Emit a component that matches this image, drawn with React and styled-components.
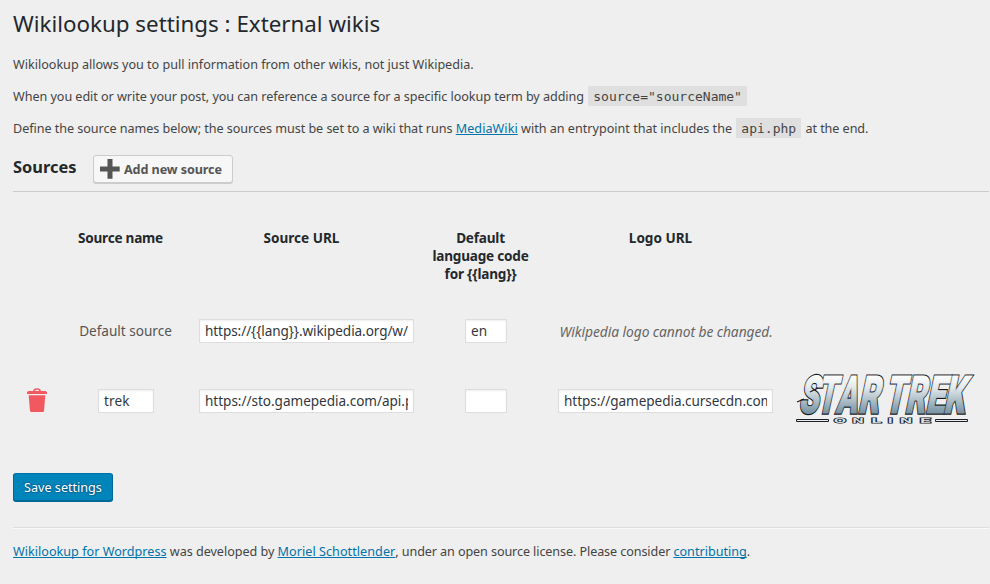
import React from "react";
import styled, { createGlobalStyle } from "styled-components";

const GlobalStyle = createGlobalStyle`
  *, *::before, *::after { box-sizing: border-box; }
  html, body { margin: 0; background: #efefef; }
  body {
    color: #444;
    font-family: "Noto Sans", sans-serif;
    font-size: 12.6px;
    line-height: 20px;
    overflow: hidden;
  }
`;

const Page = styled.main`
  height: 584px;
  padding: 9px 1px 0 13px;
  white-space: nowrap;
`;

const Title = styled.h1`
  margin: 0 0 16px;
  color: #23282d;
  font-size: 22.35px;
  font-weight: 400;
  line-height: 30px;
`;

const Paragraph = styled.p`
  margin: 0 0 12px;
  height: 20px;
  letter-spacing: ${(p) => p.$tracking || 0}px;
`;

const Phrase = styled.span`
  letter-spacing: ${(p) => p.$tracking || 0}px;
`;

const Link = styled.a`
  color: #0073aa;
  text-decoration: underline;
  text-decoration-thickness: 1px;
  text-underline-offset: 1px;
  text-decoration-skip-ink: none;
  letter-spacing: ${(p) => p.$tracking || 0}px;
`;

const Code = styled.code`
  margin: 0 1px;
  padding: 3px 5px 2px;
  background: #dfdfdf;
  font-family: "DejaVu Sans Mono", monospace;
  font-size: 13px;
  letter-spacing: 0;
`;

const SourcesBar = styled.header`
  display: flex;
  align-items: flex-start;
  height: 37px;
  margin-top: 16px;
  border-bottom: 1px solid #ccc;
`;

const SectionTitle = styled.h2`
  width: 80px;
  margin: 2px 0 0;
  color: #23282d;
  font-size: 16.4px;
  font-weight: 700;
  line-height: 20px;
`;

const AddButton = styled.button`
  display: flex;
  align-items: center;
  gap: 4px;
  width: 140px;
  height: 28px;
  padding: 0 0 0 6px;
  border: 1px solid #ccc;
  border-radius: 3px;
  background: #f7f7f7;
  box-shadow: 0 1px 0 #ccc;
  color: #555;
  font: 700 12.6px/26px "Noto Sans", sans-serif;
  letter-spacing: -0.09px;
`;

const AddLabel = styled.span`
  padding-top: 1px;
`;

const columns = "48px 130px 231px 128px 231px 1fr";

const HeadRow = styled.div`
  display: grid;
  grid-template-columns: ${columns};
  height: 104px;
  padding-top: 37px;
`;

const HeadCell = styled.div`
  padding-right: ${(p) => p.$inset || 10}px;
  color: #23282d;
  font-size: 13.57px;
  font-weight: 700;
  line-height: 18px;
  letter-spacing: ${(p) => p.$tracking || 0}px;
  text-align: center;
  white-space: pre-line;
`;

const SourceRow = styled.div`
  display: grid;
  grid-template-columns: ${columns};
  align-items: center;
  height: 70px;
`;

const Cell = styled.div`
  display: flex;
  justify-content: ${(p) => (p.$start ? "flex-start" : "center")};
  padding-left: ${(p) => p.$inset || 0}px;
  padding-bottom: ${(p) => p.$lift || 0}px;
`;

const RowLabel = styled.span`
  padding-right: 1px;
  font-size: 13.57px;
  color: #555;
`;

const Notice = styled.em`
  padding-top: 1px;
  color: #666;
  font-size: 13.8px;
  letter-spacing: ${(p) => p.$tracking || 0}px;
`;

const Field = styled.input`
  width: ${(p) => p.$width}px;
  height: 24px;
  margin: 0;
  padding: 1px 5px 2px;
  border: 1px solid #ddd;
  border-radius: 0;
  outline: 0;
  background: #fff;
  box-shadow: inset 0 1px 2px rgba(0, 0, 0, 0.07);
  color: #32373c;
  font: 13.57px/19px "Noto Sans", sans-serif;
  letter-spacing: ${(p) => p.$tracking || 0}px;
`;

const SaveButton = styled.button`
  display: block;
  width: 100px;
  height: 28px;
  margin: 37px 0 26px;
  padding: 1px 0 0;
  border: 1px solid #006799;
  border-color: #0073aa #006799 #006799;
  border-radius: 3px;
  background: #0085ba;
  box-shadow: 0 1px 0 #006799;
  color: #fff;
  font: 12.6px/25px "Noto Sans", sans-serif;
  text-shadow: 0 -1px 1px #006799, 1px 0 1px #006799, 0 1px 1px #006799, -1px 0 1px #006799;
`;

const Footer = styled.footer`
  padding-top: 14px;
  border-top: 1px solid #ddd;
  box-shadow: inset 0 1px 0 #fafafa;
`;

const Drawing = styled.svg`
  display: block;
  flex: none;
  overflow: visible;
`;

const PlusIcon = () => (
  <Drawing width="20" height="20" viewBox="0 0 20 20">
    <path d="M7.5 0h5v7.5h7.2v5h-7.2v7.2h-5v-7.2H0v-5h7.5z" fill="#555" />
  </Drawing>
);

const TrashIcon = () => (
  <Drawing width="20" height="26" viewBox="0 0 20 26">
    <path d="M7 4.5V4q0-2 3-2t3 2v.5" fill="none" stroke="#f0595f" strokeWidth="1.6" />
    <path d="M1.3 4h17.4l1.3 1.3V7H0V5.300z" fill="#f0595f" />
    <path d="M1.700 8.300h16.600L17 24l-.8 1H3.800L3 24z" fill="#f0595f" />
  </Drawing>
);

const Glyph = styled.text`
  font-family: Roboto, sans-serif;
  font-weight: 900;
  font-size: 52px;
  fill: ${(p) => (p.$outline ? "#15191c" : "url(#steel)")};
  stroke: ${(p) => (p.$outline ? "#15191c" : "url(#steel)")};
  stroke-width: ${(p) => (p.$outline ? 3.3 : 1)}px;
  stroke-linejoin: miter;
  stroke-miterlimit: 3;
`;

const SmallGlyph = styled.text`
  font-family: Inter, sans-serif;
  font-weight: 700;
  font-size: 6.4px;
  paint-order: stroke;
  fill: #dbe1e5;
  stroke: #1c2125;
  stroke-width: 1.1px;
`;

const titleLetters = [
  ["S", 6, 20], ["T", 24, 19], ["A", 43.5, 21], ["R", 65.5, 21],
  ["T", 92, 20], ["R", 112.5, 20.5], ["E", 133, 19], ["K", 151, 21],
];

const subLetters = [
  ["O", 42, 12], ["N", 60.5, 11], ["L", 79.5, 10],
  ["I", 96, 4.5], ["N", 108, 12], ["E", 128, 11],
];

const StarTrekLogo = () => (
  <Drawing width="186" height="60" viewBox="0 0 186 60">
    <defs>
      <linearGradient id="steel" gradientUnits="userSpaceOnUse" x1="0" y1="-38" x2="0" y2="0">
        <stop offset="0" stopColor="#ffffff" />
        <stop offset="0.35" stopColor="#e0e7eb" />
        <stop offset="1" stopColor="#7894a4" />
      </linearGradient>
    </defs>
    {[true, false].map((outline) =>
      titleLetters.map(([letter, x, width]) => (
        <Glyph
          key={`${outline}${x}`}
          $outline={outline}
          transform={`translate(${x} 45) skewX(-12)`}
          textLength={width}
          lengthAdjust="spacingAndGlyphs"
        >
          {letter}
        </Glyph>
      ))
    )}
    <path d="M5 34l7-3M18 24l8-4" stroke="#15191c" strokeWidth="1.1" />
    <path d="M4.500 51.500h32v2h-32zM143.500 51.500h32v2h-32z" fill="#e8ecee" stroke="#1c2125" />
    {subLetters.map(([letter, x, width]) => (
      <SmallGlyph key={x} x={x} y="55" textLength={width} lengthAdjust="spacingAndGlyphs">
        {letter}
      </SmallGlyph>
    ))}
  </Drawing>
);

export default function App() {
  return (
    <>
      <GlobalStyle />
      <Page>
        <Title>Wikilookup settings : External wikis</Title>
        <Paragraph $tracking={-0.005}>
          Wikilookup allows you to pull information from other wikis, not just Wikipedia.
        </Paragraph>
        <Paragraph $tracking={-0.045}>
          When you edit or write your post, you can reference a source for a specific lookup term by
          adding <Code>source="sourceName"</Code>
        </Paragraph>
        <Paragraph>
          <Phrase $tracking={-0.045}>
            Define the source names below; the sources must be set to a wiki that runs{" "}
          </Phrase>
          <Link $tracking={0.05}>MediaWiki</Link> with an entrypoint that includes the{" "}
          <Code>api.php</Code> <Phrase $tracking={-0.06}>at the end.</Phrase>
        </Paragraph>

        <SourcesBar>
          <SectionTitle>Sources</SectionTitle>
          <AddButton type="button">
            <PlusIcon />
            <AddLabel>Add new source</AddLabel>
          </AddButton>
        </SourcesBar>

        <HeadRow>
          <HeadCell />
          <HeadCell $tracking={-0.23} $inset={11}>Source name</HeadCell>
          <HeadCell>Source URL</HeadCell>
          <HeadCell $tracking={-0.2} $inset={11}>{"Default\nlanguage code\nfor {{lang}}"}</HeadCell>
          <HeadCell>Logo URL</HeadCell>
        </HeadRow>
        <SourceRow>
          <Cell />
          <Cell><RowLabel>Default source</RowLabel></Cell>
          <Cell><Field $width={215} $tracking={-0.08} defaultValue="https://{{lang}}.wikipedia.org/w/api.php" /></Cell>
          <Cell><Field $width={42} defaultValue="en" /></Cell>
          <Cell $start $inset={9.5}><Notice $tracking={-0.06}>Wikipedia logo cannot be changed.</Notice></Cell>
        </SourceRow>
        <SourceRow>
          <Cell $lift={2}><TrashIcon /></Cell>
          <Cell><Field $width={56} $tracking={0.15} defaultValue="trek" /></Cell>
          <Cell><Field $width={215} $tracking={-0.03} defaultValue="https://sto.gamepedia.com/api.php" /></Cell>
          <Cell><Field $width={42} defaultValue="" /></Cell>
          <Cell><Field $width={215} $tracking={-0.06} defaultValue="https://gamepedia.cursecdn.com/logo.png" /></Cell>
          <Cell $start $inset={11} $lift={6}><StarTrekLogo /></Cell>
        </SourceRow>

        <SaveButton type="button">Save settings</SaveButton>

        <Footer>
          <Link $tracking={0.02}>Wikilookup for Wordpress</Link>{" "}
          <Phrase $tracking={-0.03}>was developed by </Phrase>
          <Link $tracking={0.05}>Moriel Schottlender</Link>
          <Phrase $tracking={-0.095}>, under an open source license. Please consider </Phrase>
          <Link>contributing</Link>.
        </Footer>
      </Page>
    </>
  );
}
